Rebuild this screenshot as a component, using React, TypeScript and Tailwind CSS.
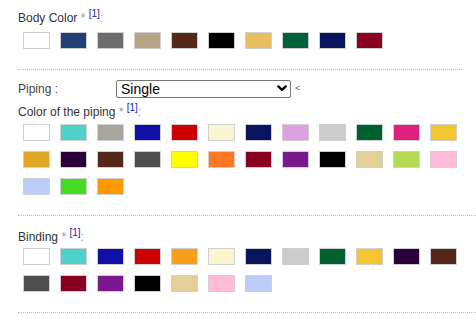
const bodyColors = ['#ffffff', '#1f3f75', '#6d6d6d', '#b8a588', '#55291a', '#000000', '#e8bf60', '#00603a', '#0a1560', '#8a0020'];

const pipingColors = [
  '#ffffff', '#4fd1cb', '#aaa49f', '#1010a8', '#cc0000', '#fbf5d2', '#0a1560', '#dda0e0', '#cccccc', '#006030', '#e0207f', '#f5c431',
  '#e0a826', '#2a0038', '#55291a', '#4d4d4d', '#ffff00', '#ff7722', '#8a0020', '#7a1890', '#000000', '#e5cf98', '#b5db55', '#ffbbd8',
  '#bcccf8', '#44dd22', '#ff9900',
];

const bindingColors = [
  '#ffffff', '#4fd1cb', '#1010a8', '#cc0000', '#f8a01c', '#fbf5d2', '#0a1560', '#cccccc', '#006030', '#f5c431', '#2a0038', '#55291a',
  '#4d4d4d', '#8a0020', '#7a1890', '#000000', '#e5cf98', '#ffbbd8', '#bcccf8',
];

function Label({ text }: { text: string }) {
  return (
    <div className="text-[12px] leading-[14px] text-[#333]">
      {text} <span className="text-[#999]">*</span>{' '}
      <sup className="text-[10px] text-[#2222aa] top-[-5px]">[1]</sup>
      <span className="text-[#999]">:</span>
    </div>
  );
}

function Swatches({ colors }: { colors: string[] }) {
  return (
    <div className="flex flex-wrap w-[444px] gap-x-[10px] gap-y-[10px] pl-[5px]">
      {colors.map((c, i) => (
        <div key={i} className="w-[27px] h-[17px] border border-[#d0d0d0]" style={{ backgroundColor: c }} />
      ))}
    </div>
  );
}

export default function App() {
  return (
    <div className="w-[476px] h-[324px] bg-white overflow-hidden pl-[18px] font-['Liberation_Sans',Arial,sans-serif]">
      <section className="pt-[11px] pb-[20px] w-[444px] border-b border-dotted border-[#bbb]">
        <Label text="Body Color" />
        <div className="mt-[7px]">
          <Swatches colors={bodyColors} />
        </div>
      </section>

      <section className="pt-[10px] pb-[20px] border-b border-dotted border-[#bbb]">
        <div className="flex items-center h-[18px]">
          <span className="w-[98px] text-[12px] text-[#444]">Piping :</span>
          <div className="relative w-[175px] h-[18px]">
            <select
              defaultValue="single"
              className="appearance-none block w-full h-[18px] border border-[#767676] rounded-[2px] bg-white text-[14px] leading-[16px] text-black pl-[4px] pr-[20px] py-0"
            >
              <option value="single">Single</option>
              <option value="double">Double</option>
            </select>
            <svg
              className="pointer-events-none absolute right-[4px] top-[5px]"
              width="10"
              height="7"
              viewBox="0 0 10 7"
            >
              <path d="M1.4 1.4 L5 5 L8.6 1.4" fill="none" stroke="#000" strokeWidth="2.4" strokeLinecap="round" strokeLinejoin="round" />
            </svg>
          </div>
          <span className="ml-[4px] text-[9px] text-[#666]">&lt;</span>
        </div>
        <div className="mt-[7px]">
          <Label text="Color of the piping" />
        </div>
        <div className="mt-[5px]">
          <Swatches colors={pipingColors} />
        </div>
      </section>

      <section className="pt-[14px] pb-[20px] border-b border-dotted border-[#bbb]">
        <Label text="Binding" />
        <div className="mt-[4px]">
          <Swatches colors={bindingColors} />
        </div>
      </section>
    </div>
  );
}
